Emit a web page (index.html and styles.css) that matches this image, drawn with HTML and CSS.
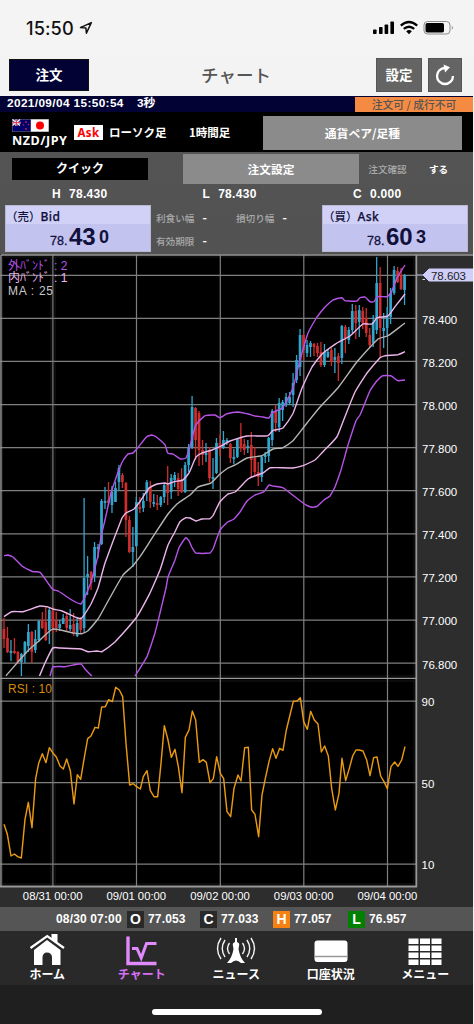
FILE: index.html
```html
<!DOCTYPE html>
<html lang="ja">
<head>
<meta charset="utf-8">
<title>チャート</title>
<link rel="stylesheet" href="styles.css">
</head>
<body>
<div class="app">
  <div class="status">
    <span class="clock">15:50</span>
    <svg class="loc" width="14" height="14" viewBox="0 0 14 14"><path d="M1.5 6.6 12.3 1.6 7.4 12.2 6.9 7.1Z" fill="none" stroke="#111" stroke-width="1.5" stroke-linejoin="round"/></svg>
    <svg class="signals" width="82" height="16" viewBox="0 0 82 16">
      <g fill="#000"><rect x="0" y="9.500" width="3.6" height="4.500" rx=".8"/><rect x="6" y="7" width="3.6" height="7" rx=".8"/><rect x="11.6" y="4.5" width="3.6" height="9.500" rx=".8"/><rect x="17.400" y="1.500" width="3.600" height="12.500" rx=".8"/></g>
      <g fill="none" stroke="#000" stroke-width="2.300"><path d="M27.800 5.600Q36 -1.600 44.200 5.600"/><path d="M30.800 8.900Q36 4.500 41.200 8.900"/></g>
      <path d="M33.200 11.200Q36 9 38.800 11.200L36 14.200Z"/>
      <rect x="51" y="1.500" width="26" height="12.500" rx="3.500" fill="none" stroke="#8b8b8b"/><rect x="52.500" y="3" width="18.500" height="9.500" rx="1.800"/><path d="M78.800 5.800Q81 7.700 78.800 9.700Z" fill="#8b8b8b"/>
    </svg>
  </div>
  <header class="nav">
    <div class="btn-order">注文</div>
    <h1>チャート</h1>
    <div class="btn-set">設定</div>
    <div class="btn-reload"><svg width="34" height="33" viewBox="0 0 34 33"><path d="M17 10A8 8 0 1 0 25 18" fill="none" stroke="#fff" stroke-width="2.300"/><path d="M15.500 6.500 22 9.300 17 14.500Z" fill="#fff"/></svg></div>
  </header>
  <div class="timebar"><span class="stamp">2021/09/04 15:50:54</span><span class="sec">3秒</span><span class="state">注文可 / 成行不可</span></div>
  <div class="pair">
    <div class="pair-name">
      <svg width="37" height="13" viewBox="0 0 37 13"><rect width="37" height="13" fill="#777"/><rect x=".5" y=".5" width="18" height="12" fill="#00006b"/><path d="M.5.5 8 6.500M8 .5.5 6.500" stroke="#fff" stroke-width="1.200"/><path d="M4.300.5V7M.5 3.700H8.500" stroke="#fff" stroke-width="2"/><path d="M4.300.5V7M.5 3.700H8.500" stroke="#e0203a"/><g fill="#d8203c"><circle cx="14" cy="3" r=".9"/><circle cx="11.500" cy="6" r=".8"/><circle cx="16.500" cy="5.500" r=".8"/><circle cx="14" cy="10" r=".9"/></g><rect x="19" y=".5" width="17.500" height="12" fill="#fff"/><circle cx="28" cy="6.500" r="4" fill="#f00"/></svg>
      <b>NZD/JPY</b>
    </div>
    <span class="ask-tag">Ask</span><span class="candle-name">ローソク足</span><span class="period">1時間足</span>
    <div class="btn-pair">通貨ペア/足種</div>
  </div>
  <section class="trade">
    <div class="quick-row"><div class="quick">クイック</div><div class="order-set">注文設定</div><span class="confirm">注文確認</span><span class="yes">する</span></div>
    <div class="hlc"><span>H<i></i>78.430</span><span>L<i></i>78.430</span><span>C<i></i>0.000</span></div>
    <div class="prices">
      <div class="price"><div class="side">（売）<span>Bid</span></div><div class="num"><small>78.</small><strong>43</strong><em>0</em></div></div>
      <div class="opts"><span>利食い幅<b>-</b></span><span>損切り幅<b>-</b></span><span>有効期限<b>-</b></span></div>
      <div class="price"><div class="side">（買）<span>Ask</span></div><div class="num"><small>78.</small><strong>60</strong><em>3</em></div></div>
    </div>
  </section>
  <svg class="chart" width="473" height="653" viewBox="0 254 473 653">
    <rect x="1" y="255" width="416" height="632" fill="#000"/>
    <g class="halo"><path d="M2.500 257V885M51 257V885M55 257V885M414 257V885M3 257H414M3 676H414M3 681H414M3 884H414"/></g>
    <g class="grid"><path d="M0 275.300H416M0 318.400H416M0 361.400H416M0 404.600H416M0 447.600H416M0 490.700H416M0 533.800H416M0 576.900H416M0 620.100H416M0 663.200H416M0 701.200H416M0 782.600H416M0 864.200H416"/><path d="M52.900 255V887M136.500 255V887M220.300 255V887M303.800 255V887M387.500 255V887"/></g>
    <path class="frame" d="M1 255H474M1 255V887M0 678.400H417"/><path class="frame thick" d="M416.300 255V887M0 886.500H417"/>
    <g class="legend"><text x="8" y="269.500" fill="#b954ea">外ﾊﾞﾝﾄﾞ</text><text x="54" y="269.500" fill="#b954ea">: 2</text><text x="8" y="282" fill="#eab4ee">内ﾊﾞﾝﾄﾞ</text><text x="54" y="282" fill="#eab4ee">: 1</text><text x="8" y="294.500" fill="#c8c8c8" textLength="45">MA : 25</text><text x="8" y="692.500" fill="#d48a0c" textLength="44">RSI : 10</text></g>
    <g id="candles"></g>
    <g id="bands"></g>
    <g transform="translate(0 680) scale(.33333)"><polyline class="rsi" points="12,433 22,463 33,528 43,522 53,530 64,534 75,418 85,367 96,443 107,295 116,250 127,221 138,248 148,203 158,218 169,231 180,258 190,267 200,237 211,272 222,372 232,284 242,298 253,232 263,176 273,168 285,142 295,144 305,81 316,80 326,59 337,65 347,22 358,30 368,50 378,190 389,315 400,311 410,320 421,327 430,290 441,272 451,332 462,350 473,350 483,250 493,137 504,180 514,232 525,208 535,260 546,338 556,172 567,150 577,93 587,120 598,247 609,239 619,247 630,308 640,296 650,230 661,280 671,296 681,395 692,410 702,325 714,285 723,303 734,203 745,202 755,390 765,403 776,470 786,345 796,295 807,245 818,206 828,235 839,205 849,211 859,150 870,105 880,64 891,63 901,53 911,125 922,148 932,94 943,120 954,132 964,216 974,198 985,228 995,325 1006,390 1017,340 1026,235 1037,302 1048,265 1058,228 1068,210 1078,210 1089,213 1100,240 1110,287 1121,233 1131,231 1142,288 1152,305 1162,326 1173,260 1184,246 1194,259 1205,240 1215,200"/></g>
    <g class="axis"><text x="422" y="323.800">78.400</text><text x="422" y="366.800">78.200</text><text x="422" y="410">78.000</text><text x="422" y="453">77.800</text><text x="422" y="496">77.600</text><text x="422" y="539">77.400</text><text x="422" y="582.300">77.200</text><text x="422" y="625.300">77.000</text><text x="422" y="668.500">76.800</text></g>
    <g class="axis rsi-axis"><text x="421.500" y="706.300">90</text><text x="421.500" y="787.500">50</text><text x="421.500" y="869.300">10</text></g>
    <path d="M417 275H423L429 269H473V281H429L423 275" fill="#d0cffa" stroke="#d0cffa"/>
    <path d="M422.500 279.500H425" stroke="#ddd"/>
    <text x="431" y="279.500" class="now" textLength="35">78.603</text>
    <g class="dates"><text x="52.700" y="900">08/31 00:00</text><text x="136.300" y="900">09/01 00:00</text><text x="220" y="900">09/02 00:00</text><text x="303.700" y="900">09/03 00:00</text><text x="387.400" y="900">09/04 00:00</text></g>
  </svg>
  <div class="ohlc"><span>08/30 07:00</span><b>O</b><span>77.053</span><b>C</b><span>77.033</span><b class="hi">H</b><span>77.057</span><b class="lo">L</b><span>76.957</span></div>
  <nav class="tabs">
    <div class="tab"><svg width="36" height="35" viewBox="0 0 36 35"><path d="M2 17.500 18 4 34.500 17.500" fill="none" stroke="#292929" stroke-width="5"/><path d="M5 19 18 9 31.500 19V34H23V26Q22.500 21.500 18 21.500Q14 21.500 13.500 26V34H5Z" fill="#fff"/><path d="M1.500 17 18.200 5 35 17" fill="none" stroke="#fff" stroke-width="2.200"/><path d="M22.500 3H28.500V12.500L22.500 8Z" fill="#fff"/></svg><span>ホーム</span></div>
    <div class="tab on"><svg width="36" height="35" viewBox="0 0 36 35"><path d="M4 5.500V32.500H32.500" fill="none" stroke="#e08afc" stroke-width="3.400"/><path d="M8 17.500H13L17.200 27 22.500 12.500H32.500" fill="none" stroke="#e08afc" stroke-width="3"/></svg><span>チャート</span></div>
    <div class="tab"><svg width="42" height="35" viewBox="0 0 42 35"><g fill="none" stroke="#f4f4f4" stroke-width="1.400"><path d="M14.500 12Q10.500 17.500 14.500 23M10 9Q4.500 17.500 10 26M6 7Q-1 17.500 6 28"/><path d="M27.500 12Q31.500 17.500 27.500 23M32 9Q37.500 17.500 32 26M36 7Q43 17.500 36 28"/></g><path d="M20 7H22V11Q25 12 24 15L23.500 18Q25 27 30 32H26Q21 27 16 32H12Q17 27 18.500 18L18 15Q17 12 20 11Z" fill="#fff"/></svg><span>ニュース</span></div>
    <div class="tab"><svg width="36" height="35" viewBox="0 0 36 35"><rect x="1.500" y="9.500" width="33" height="21.500" rx="3" fill="#fff"/><path d="M1.500 25.500H34.500" stroke="#999" stroke-width="1.600"/></svg><span>口座状況</span></div>
    <div class="tab"><svg width="36" height="35" viewBox="0 0 36 35"><g fill="#fff"><path d="M1.500 7.500H11.500V13H1.500ZM13 7.500H23V13H13ZM24.500 7.500H34.500V13H24.500ZM1.500 14.500H11.500V20H1.500ZM13 14.500H23V20H13ZM24.500 14.500H34.500V20H24.500ZM1.500 21.500H11.500V27H1.500ZM13 21.500H23V27H13ZM24.500 21.500H34.500V27H24.500ZM1.500 28.500H11.500V34H1.500ZM13 28.500H23V34H13ZM24.500 28.500H34.500V34H24.500Z"/></g></svg><span>メニュー</span></div>
  </nav>
  <div class="home"><div class="bar"></div></div>
</div>
<script src="chart.js"></script>
</body>
</html>
```
FILE: styles.css
```css
* { box-sizing: border-box; }
body { margin: 0; background: #f3f3f3; font-family: "Liberation Sans", "Noto Sans CJK JP", sans-serif; }
.app { width: 473px; height: 1024px; display: flex; flex-direction: column; overflow: hidden; white-space: nowrap; }
.app > * { flex: none; }
.status { height: 55px; display: flex; align-items: flex-start; padding: 17px 0 0 26px; background: #f4f4f4; }
.clock { font: 500 18.200px/22px Inter, sans-serif; letter-spacing: .1px; width: 50px; color: #111; }
.loc { margin: 4px 0 0 3px; }
.signals { margin: 3px 0 0 280px; }
.nav { height: 41px; display: flex; background: #f3f3f3; color: #fff; font-family: "Noto Sans CJK JP", sans-serif; text-align: center; }
.btn-order { width: 80px; height: 32px; margin: 4px 0 0 9px; background: #020235; border: 1px solid #111; font: bold 13.500px/29px "Noto Sans CJK JP", sans-serif; }
h1 { margin: 4px 0 0 83px; width: 128px; font: 500 17.500px/31px "Noto Sans CJK JP", sans-serif; color: #555; }
.btn-set { width: 46px; height: 34px; margin: 3px 6px 0 76px; background: #646464; border: 1px solid #555; font: bold 13.500px/31px "Noto Sans CJK JP", sans-serif; }
.btn-reload { width: 34px; height: 34px; margin-top: 3px; background: #646464; border: 1px solid #555; }
.btn-reload svg { display: block; margin: -1px; }
.timebar { height: 16px; display: flex; background: #020235; color: #fff; font: bold 11.800px/15px "Liberation Sans", "Noto Sans CJK JP", sans-serif; padding-left: 7px; }
.stamp { width: 130px; letter-spacing: .38px; }
.sec { width: 218px; }
.state { width: 118px; height: 15px; background: #f58b43; color: #555; text-align: center; margin-top: 1px; font: 500 10.800px/14px "Noto Sans CJK JP", sans-serif; }
.pair { height: 40px; display: flex; background: #000; color: #fff; font: bold 11.500px/18px "Noto Sans CJK JP", sans-serif; padding-left: 12px; }
.pair-name { width: 62px; padding-top: 7px; line-height: 14px; }
.pair-name svg { display: block; }
.pair-name b { display: block; font: bold 12.600px/15px "Noto Sans", sans-serif; letter-spacing: .5px; margin-top: 1px; }
.ask-tag { width: 29px; height: 15px; margin-top: 13px; background: #fff; color: #f00; text-align: center; font: bold 11.500px/15px "Noto Sans", sans-serif; letter-spacing: .3px; }
.candle-name { width: 80px; margin: 11px 0 0 6px; }
.period { width: 74px; margin-top: 11px; }
.btn-pair { width: 199px; height: 34px; margin-top: 4px; background: #8b8b8b; text-align: center; line-height: 34px; font-size: 11.800px; }
.trade { height: 102px; background: linear-gradient(#545454, #525252); color: #fff; }
.quick-row { height: 32px; display: flex; text-align: center; font: bold 12px/30px "Noto Sans CJK JP", sans-serif; }
.quick { width: 136px; height: 22px; margin: 6px 35px 0 12px; background: #000; line-height: 20px; }
.order-set { width: 176px; height: 30px; margin-top: 2px; background: #8b8b8b; font-size: 11.700px; }
.confirm { width: 39px; margin: 2px 0 0 9px; color: #aaa; font-size: 9.600px; font-weight: 500; }
.yes { margin: 2px 0 0 22px; font-size: 9.600px; }
.hlc { height: 21px; display: flex; font: bold 12px/21px "Liberation Sans", sans-serif; padding-left: 52px; }
.hlc span { width: 150.500px; flex: none; letter-spacing: .3px; }
.hlc i { display: inline-block; width: 8px; }
.prices { display: flex; padding-left: 5px; }
.price { width: 146px; height: 47px; border: 1px solid #b8b8d0; background: linear-gradient(#d1d1f7 0 18px, #c3c3ef 18px); color: #11113b; }
.side { height: 18px; margin-top: 1px; font: 500 11.500px/19px "Noto Sans CJK JP", sans-serif; }
.side span { font: 500 12px/19px "Noto Sans", sans-serif; -webkit-text-stroke: .25px; letter-spacing: .4px; }
.num { display: flex; align-items: baseline; padding-left: 44px; height: 26px; line-height: 24px; font-weight: bold; }
.num small { font-size: 12.500px; width: 19px; font-weight: normal; -webkit-text-stroke: .3px; }
.num strong { font-size: 24px; width: 30px; letter-spacing: -.2px; }
.num em { font-size: 18px; font-style: normal; font-weight: bold; margin-bottom: 2px; align-self: flex-end; line-height: 23px; }
.opts { width: 171px; height: 47px; display: grid; grid-template-columns: 80px 80px; grid-template-rows: 23px 23px; padding-left: 5px; color: #aaa; font: 500 9.600px/23px "Noto Sans CJK JP", sans-serif; }
.opts b { color: #fff; margin-left: 8px; font-size: 12px; }
.chart { display: block; background: #2d2d2d; font-family: "Liberation Sans", "Noto Sans CJK JP", sans-serif; }
.halo path { stroke: #191919; stroke-width: 1; fill: none; }
.grid path { stroke: #7f7f7f; stroke-width: 1.200; fill: none; }
.frame { stroke: #999; stroke-width: 1.300; fill: none; }
.thick { stroke-width: 1.800; }
.legend text { font: 12px "Liberation Sans", "Noto Sans CJK JP", sans-serif; }
.rsi { fill: none; stroke: #e99a10; stroke-width: 4.300; stroke-linejoin: round; }
.axis text { font-size: 11.500px; fill: #fff; }
.now { font-size: 11.500px; fill: #222; }
.dates text { font-size: 11.300px; fill: #fff; text-anchor: middle; }
.wick { fill: none; stroke-width: 1.300; }
.body { fill: none; stroke-width: 2.700; }
.up { stroke: #31a5cc; }
.down { stroke: #cf2c2c; }
.band { fill: none; stroke-width: 1.400; stroke-linejoin: round; }
.outer { stroke: #b654e8; }
.inner { stroke: #edb5ec; }
.mean { stroke: #b5b5b5; }
.ohlc { height: 24px; background: #555; color: #fff; display: flex; align-items: center; font: bold 12px/17px "Liberation Sans", sans-serif; padding-left: 56px; }
.ohlc span { width: 54px; letter-spacing: .15px; flex: none; }
.ohlc span:first-child { width: 71px; }
.ohlc span:nth-child(3), .ohlc span:nth-child(5) { width: 52px; }
.ohlc b { width: 17px; height: 17px; background: #292929; text-align: center; margin-right: 4px; font-size: 14px; flex: none; }
.ohlc b.hi { background: #f58210; }
.ohlc b.lo { background: #008000; }
.tabs { height: 54px; background: #292929; display: grid; grid-template-columns: 94.500px 94.500px 94.500px 94.500px 94.500px; color: #fff; }
.tab { display: flex; flex-direction: column; align-items: center; font: bold 12px/16px "Noto Sans CJK JP", sans-serif; }
.tab svg { height: 35px; }
.on { color: #d670f5; }
.home { height: 39px; background: #1f1f1f; padding-top: 24px; }
.bar { width: 170px; height: 6px; border-radius: 3px; background: #fff; margin-left: 152px; }
```
FILE: chart.js
```js
// Each candle: direction, high, body top, body bottom, low.
const candles = `d618,629,639,648 d627,638,652,653 u640,651,653,661 d638,651,653,654 d651,652,662,664 u653,654,662,676 u641,642,654,663 u624,632,646,652 d631,632,652,663 u630,639,650,653
u620,621,640,642 d612,620,628,629 d607,622,640,641 u608,610,630,644 d607,611,628,633 d612,621,628,632 u620,624,628,631 u614,618,624,624 d612,616,628,631 u609,625,629,631
d613,624,634,636 u617,623,636,637 d617,619,630,633 u498,578,628,633 u556,574,577,595 d571,572,583,590 u542,547,576,582 u544,547,549,558 u499,501,544,545 u487,501,503,509
d482,500,503,506 u486,492,505,513 u482,488,502,502 u465,468,482,490 d473,475,482,488 d482,483,520,537 d516,520,552,553 u527,547,552,567 u497,502,546,547 d497,507,509,513
u493,501,508,512 u480,482,493,501 d481,487,502,508 u494,502,504,507 d495,503,505,510 u496,497,505,507 u483,485,497,503 d466,485,493,505 u474,478,492,499 u472,475,480,487
d473,478,489,496 d468,480,492,493 u462,465,492,493 u444,448,465,472 u396,407,447,449 d407,408,440,460 d411,413,450,466 d440,450,455,465 u443,453,455,462 d447,450,478,482
u458,477,479,489 u438,443,473,474 d435,443,449,456 u431,440,448,449 u438,440,443,445 d443,444,458,463 u449,457,459,464 u438,439,457,458 d423,438,448,452 d439,444,450,455
u440,446,448,453 d432,445,460,477 d447,458,472,475 d462,472,477,486 u456,457,477,482 u452,455,457,463 u437,438,456,462 u409,411,440,446 d405,411,423,432 u398,403,427,432
u400,402,410,421 u393,397,405,407 u392,397,403,405 u373,383,395,407 u355,360,380,383 u329,335,367,376 d334,335,350,360 u340,345,353,357 u341,343,347,357 d343,344,347,356
d343,346,353,357 d342,352,365,367 u344,352,365,367 u349,352,357,358 d348,350,362,366 u348,357,360,373 d353,356,363,381 u325,326,358,364 d325,327,338,353 u327,330,340,344
u304,311,330,333 d305,311,323,339 u305,310,322,337 d307,311,323,329 d308,318,333,337 d328,335,345,347 u315,322,343,347 u257,283,330,334 d267,283,328,357 u313,328,331,348
u307,317,328,335 u288,293,317,324 u266,270,293,295 d267,271,282,283 d268,275,289,290 u274,275,290,305`.split(/\s+/);

const paths = { u: ['', ''], d: ['', ''] };
candles.forEach((c, i) => {
  const x = (4 + 3.483 * i).toFixed(2);
  const [high, top, bottom, low] = c.slice(1).split(',');
  paths[c[0]][0] += `M${x} ${high}V${low}`;
  paths[c[0]][1] += `M${x} ${top}V${bottom}`;
});
document.getElementById('candles').innerHTML = [['u', 'up'], ['d', 'down']].map(([k, cls]) =>
  `<path class="wick ${cls}" d="${paths[k][0]}"/><path class="body ${cls}" d="${paths[k][1]}"/>`).join('');

const bands = [
  ['mean', '6,675.7 27,651.7 40,640 52.7,629 73,633 82,633.7 88,630.7 98,619 107,603 123,575 133,565.7 140,556.7 153,536.7 168,514 177,504 190,495 198,487 211,483 220,474 228,468 235,465 247,458 262,455.7 273,449 283,447.7 293,440.7 307,423 320,407 338,387.7 357,361.7 378,339 388,335.7 405,323'],
  ['inner', '4,616.7 11.7,611.7 23,611.7 40,606 47,606.7 53,609 62,611 81,618.7 91,604 98,588 105,563 122,518 126,513 134,509 140,501.5 149,488 157,484 165,483 168,484 174,481.7 183,480 189,473 196,457 202,453 212,450 220,446.7 230,441 247,436 268,435.7 273,430.4 283,428 293,413.5 302,388 312,367 322,354 337,343 350,336 363,324 372,324 377,317.7 388,316 395,306.7 405,294'],
  ['inner', '39.5,676 45,663 52.7,648 60,648 81,649 88,651.7 97,651 102,651.7 115,642 137,616.7 150,593 160,570 168,545 175,531.7 180,521.7 186,517.7 190,518 196,521 202,519 210,518.7 213,515.7 220,501.7 228,494 235,492 248,479 257,475 263,473 270,467.8 293,468 303,465.7 315,460 323,451.7 337,436.7 343,421.7 355,392 367,373 380,357.7 385,355.7 398,354.7 405,351.7'],
  ['outer', '4,555.7 8,555 13,557 22,566 27,569 33,571.7 40,572.3 52.7,589.3 58,591 81,604 90.7,583 97.7,557 101,537 105,520 111,493 117,475 121.7,463 124,459 128,454 133,453 136.7,449 146.7,436.7 151.7,435 156,436.7 165,444.7 167.7,453 173,454 180.7,459 186,458 189,450 195.7,425 205,415.7 215,415 220,417.7 227,413.7 238,412 248,414 255,416 263,417 269,418 272,413 277,410.5 283,407.5 293,388 300,360 308,333 317,317 325,307 333,300 341.7,297.7 345,300.7 357,301 360,297.7 365,297 370,301.7 374,301.7 377,296.7 387,296.7 391,293 397,278 405,265'],
  ['outer', '50,676 52.7,667 65,666.7 81,663.7 85,669 91.7,676'],
  ['outer', '135,676 147,656.7 155,633 160,613 166,588 168,577 175,560 179,547.7 185.7,537.7 189,540.7 191.7,547 195.7,553 210,553 213,549 220,530 227.7,522 234,519 240,512 247,501 255,495 264,491.7 269,485 272.7,486 282.7,487.7 290,493 300,500.7 306,505 312,507.3 317,506.5 324,500 330,496 335,487 341,470 348,445 356,420.7 360,415 370,390.7 376.7,381 382.7,375.7 390.7,375.7 394,378 398,380.7 405,380']
];
// Lightly rounded curve through the points.
function curve(text) {
  const p = text.split(' ').map(s => s.split(',').map(Number));
  let d = `M${p[0]}`;
  for (let i = 0; i < p.length - 1; i++) {
    const a = p[Math.max(i - 1, 0)], b = p[i], c = p[i + 1], e = p[Math.min(i + 2, p.length - 1)];
    const k = (c[0] - b[0]) / 3;
    const s1 = (c[1] - a[1]) / (c[0] - a[0]), s2 = (e[1] - b[1]) / (e[0] - b[0]), m = (c[1] - b[1]) / (c[0] - b[0]);
    d += `C${b[0] + k} ${b[1] + k * (s1 + m) / 2} ${c[0] - k} ${c[1] - k * (s2 + m) / 2} ${c}`;
  }
  return d;
}
document.getElementById('bands').innerHTML = bands.map(([cls, pts]) => `<path class="band ${cls}" d="${curve(pts)}"/>`).join('');
```
